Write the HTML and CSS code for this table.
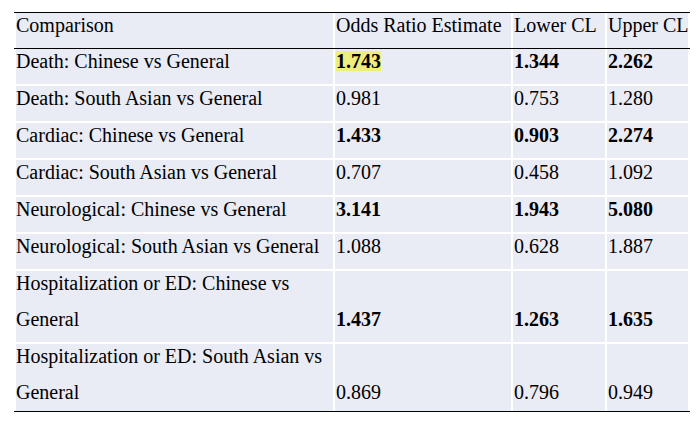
FILE: index.html
```html
<!DOCTYPE html>
<html>
<head>
<meta charset="utf-8">
<link rel="stylesheet" href="styles.css">
</head>
<body>
<div class="table">
  <div class="row head">
    <div class="cell"><span class="txt">Comparison</span></div>
    <div class="cell"><span class="txt">Odds Ratio Estimate</span></div>
    <div class="cell"><span class="txt">Lower CL</span></div>
    <div class="cell"><span class="txt">Upper CL</span></div>
  </div>
  <div class="rows">
    <div class="row">
      <div class="cell"><span class="txt">Death: Chinese vs General</span></div>
      <div class="cell b"><span class="txt"><span class="hl">1.743</span></span></div>
      <div class="cell b"><span class="txt">1.344</span></div>
      <div class="cell b"><span class="txt">2.262</span></div>
    </div>
    <div class="row">
      <div class="cell"><span class="txt">Death: South Asian vs General</span></div>
      <div class="cell"><span class="txt">0.981</span></div>
      <div class="cell"><span class="txt">0.753</span></div>
      <div class="cell"><span class="txt">1.280</span></div>
    </div>
    <div class="row">
      <div class="cell"><span class="txt">Cardiac: Chinese vs General</span></div>
      <div class="cell b"><span class="txt">1.433</span></div>
      <div class="cell b"><span class="txt">0.903</span></div>
      <div class="cell b"><span class="txt">2.274</span></div>
    </div>
    <div class="row">
      <div class="cell"><span class="txt">Cardiac: South Asian vs General</span></div>
      <div class="cell"><span class="txt">0.707</span></div>
      <div class="cell"><span class="txt">0.458</span></div>
      <div class="cell"><span class="txt">1.092</span></div>
    </div>
    <div class="row">
      <div class="cell"><span class="txt">Neurological: Chinese vs General</span></div>
      <div class="cell b"><span class="txt">3.141</span></div>
      <div class="cell b"><span class="txt">1.943</span></div>
      <div class="cell b"><span class="txt">5.080</span></div>
    </div>
    <div class="row">
      <div class="cell"><span class="txt">Neurological: South Asian vs General</span></div>
      <div class="cell"><span class="txt">1.088</span></div>
      <div class="cell"><span class="txt">0.628</span></div>
      <div class="cell"><span class="txt">1.887</span></div>
    </div>
    <div class="row">
      <div class="cell wrap"><span class="txt">Hospitalization or ED: Chinese vs General</span></div>
      <div class="cell b end"><span class="txt">1.437</span></div>
      <div class="cell b end"><span class="txt">1.263</span></div>
      <div class="cell b end"><span class="txt">1.635</span></div>
    </div>
    <div class="row last">
      <div class="cell wrap"><span class="txt">Hospitalization or ED: South Asian vs General</span></div>
      <div class="cell end"><span class="txt">0.869</span></div>
      <div class="cell end"><span class="txt">0.796</span></div>
      <div class="cell end"><span class="txt">0.949</span></div>
    </div>
  </div>
</div>
</body>
</html>
```

FILE: styles.css
```css
html, body {
  margin: 0;
  padding: 0;
  background: #ffffff;
}

body {
  font-family: "Liberation Serif", "Times New Roman", serif;
  font-size: 20px;
  color: #000000;
}

.table {
  margin: 12px 0 0 14px;
  width: 676px;
  border-top: 1px solid #000000;
  border-bottom: 1px solid #000000;
}

.row {
  display: grid;
  grid-template-columns: 317px 176px 92px 81px;
  column-gap: 2px;
  padding: 0 2px;
}

.head {
  border-bottom: 1px solid #000000;
}

.rows {
  display: flex;
  flex-direction: column;
  gap: 2px;
}

.cell {
  background: #e9ebf5;
  line-height: 36px;
  padding: 0 0 5px 1px;
  white-space: nowrap;
}

.cell.wrap {
  white-space: normal;
}

.row .cell:first-child {
  padding-left: 0;
}

.txt {
  display: block;
  margin-top: -6px;
}

.end {
  display: flex;
  flex-direction: column;
  justify-content: flex-end;
}

.b {
  font-weight: bold;
}

.hl {
  background: #eeee7c;
  display: inline-block;
  line-height: 20px;
}

.last .cell {
  padding-bottom: 1px;
}
```
